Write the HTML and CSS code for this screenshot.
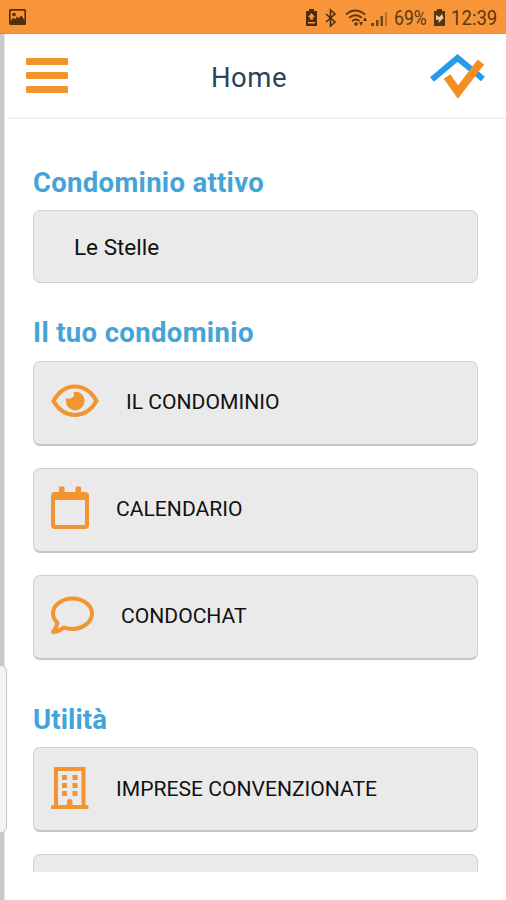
FILE: index.html
```html
<!DOCTYPE html>
<html lang="it">
<head>
<meta charset="utf-8">
<title>Home</title>
<link rel="stylesheet" href="styles.css">
</head>
<body>
<div class="status">
  <svg class="status-photo" width="17" height="16" viewBox="0 0 17 16"><path fill="#543009" fill-rule="evenodd" d="M1.500 0h14a1.500 1.500 0 0 1 1.500 1.500v13a1.500 1.500 0 0 1-1.500 1.500h-14a1.500 1.500 0 0 1-1.500-1.500v-13a1.500 1.500 0 0 1 1.500-1.500zM1.700 1.700v10l2.500-3 2 1.500 2-3 1.500 2 2.500-3 3.200 4.500v-9z"/><circle cx="5" cy="5.500" r="1.800" fill="#543009"/></svg>
  <div class="status-right">
    <svg width="88" height="20" viewBox="0 0 88 20">
      <path fill="#4a2d10" fill-rule="evenodd" d="M4 1h5v2h3v15H1V3h3zM6.500 5L3 9h1.800v2.500h3.400V9H10zM3 14v1.500h7V14z"/>
      <path fill="none" stroke="#4a2d10" stroke-width="1.600" d="M21 6l9 8-4.500 4V2l4.500 4-9 8"/>
      <g fill="none" stroke="#5b3611" stroke-width="1.900"><path d="M41 6.500q9-8 19 0"/><path d="M44 9.800q6.500-5 13 0"/><path d="M47 13q4-3 7.500 0"/></g>
      <circle cx="51" cy="16" r="1.800" fill="#5b3611"/>
      <path fill="#5b3611" d="M54 14h4l-2 4zM58 13h4l-2-4z"/>
      <path fill="#754615" d="M66 15h3v3h-3zM71 12h2.500v6H71zM75.500 8H78v10h-2.500z"/>
      <path fill="#b87029" d="M80 4h2v14h-2z"/>
    </svg>
    <span class="battery-level">69%</span>
    <svg class="battery" width="13" height="18" viewBox="0 0 13 18"><path fill="#543612" d="M4 0h5v2h3v15H1V2h3z"/><path fill="#f9c98f" d="M3 6l3.500 2L9 5l1.500 4-5 5 .5-3.500-3 .5z"/></svg>
    <span class="clock">12:39</span>
  </div>
</div>
<div class="screen">
  <div class="page">
    <header class="topbar">
      <div class="menu"><i></i><i></i><i></i></div>
      <h1>Home</h1>
      <svg class="logo" width="56" height="46" viewBox="430 53 56 46"><path fill="none" stroke="#259be9" stroke-width="6" stroke-linejoin="miter" d="M432 79.500L457.500 58l25.500 21"/><path fill="none" stroke="#f38f20" stroke-width="8" d="M447 76.500l11 15.500L481 62"/></svg>
    </header>
    <main class="content">
      <h2>Condominio attivo</h2>
      <div class="card active">Le Stelle</div>
      <h2 class="tuo">Il tuo condominio</h2>
      <div class="card button">
        <svg width="48" height="34" viewBox="0 0 48 34"><path fill="none" stroke="#f29430" stroke-width="4" d="M2.500 17C13-2.500 35-2.500 45.500 17C35 35.500 13 35.500 2.500 17z"/><path fill="#f29430" d="M22.500 8.200C28 6.500 33.500 11 33.500 17a9.300 9.300 0 0 1-18.600 0c0-1 .2-2 .5-3 2.500 1.500 6 .5 7.300-1.800.6-1.300.5-2.700-.2-4z"/></svg>
        <span>IL CONDOMINIO</span>
      </div>
      <div class="card button">
        <svg width="38" height="44" viewBox="0 0 38 44"><path fill="#f29430" fill-rule="evenodd" d="M8 1.500Q8 .5 9 .5h3.500q1 0 1 1V6h11V1.500q0-1 1-1H29q1 0 1 1V6h4q4 0 4 4v29q0 4-4 4H4q-4 0-4-4V10q0-4 4-4h4zM4 14v24q0 1 1 1h28q1 0 1-1V14z"/></svg>
        <span>CALENDARIO</span>
      </div>
      <div class="card button">
        <svg width="43" height="38" viewBox="0 0 43 38"><path fill="none" stroke="#f29430" stroke-width="4" stroke-linejoin="round" d="M21.500 2.500C32 2.500 41 9 41 17.500S32 33 21.500 33c-3 0-6-.5-8.500-1.500C9.500 34 6 36 2 36c2-2 3.500-5 4.500-9C3.500 24 2 21 2 17.500 2 9 11 2.500 21.500 2.500z"/></svg>
        <span>CONDOCHAT</span>
      </div>
      <h2 class="util">Utilità</h2>
      <div class="card button imprese">
        <svg width="38" height="42" viewBox="0 0 38 42"><path fill="none" stroke="#f29430" stroke-width="4" d="M5 38V2h27.500v36"/><path fill="#f29430" d="M2 38h34q1.500 0 1.500 2v2H0v-2q0-2 2-2zM11 8h5v5h-5zM21.500 8h5v5h-5zM11 16h5v5h-5zM21.500 16h5v5h-5zM11 24h5v5h-5zM21.500 24h5v5h-5zM16 34q0-2 2.700-2t2.800 2v5H16z"/></svg>
        <span>IMPRESE CONVENZIONATE</span>
      </div>
      <div class="card button"></div>
    </main>
  </div>
</div>
<div class="handle"></div>
</body>
</html>
```
FILE: styles.css
```css
* { box-sizing: border-box; }
body {
  margin: 0;
  height: 900px;
  overflow: hidden;
  position: relative;
  background: #fff;
  font-family: Roboto, "Liberation Sans", sans-serif;
}
.status {
  height: 34px;
  background: #f89538;
  border-bottom: 1px solid #ee8a1c;
  display: flex;
  align-items: center;
  justify-content: space-between;
  padding: 0 9px;
  color: #5c3915;
}
.status-photo { margin-top: 1px; }
.status-right {
  display: flex;
  align-items: center;
  font-size: 20px;
  line-height: 24px;
  padding-top: 2px;
}
.battery-level { width: 33px; margin-left: 1px; white-space: nowrap; transform: scaleX(.88); transform-origin: left; }
.battery { margin: 0 5px 0 6px; }
.clock { width: 46px; white-space: nowrap; transform: scaleX(.93); transform-origin: left; }
.screen {
  height: 866px;
  background: linear-gradient(90deg, #c9c9c9 0, #c9c9c9 4px, #e6e6e6 4px, #e6e6e6 5px, #fff 5px);
  padding-left: 5px;
}
.page { background: #fff; height: 838px; overflow: hidden; }
.topbar {
  height: 85px;
  margin-left: 3px;
  border-bottom: 2px solid #f0f0f0;
  display: flex;
  align-items: center;
  justify-content: space-between;
  padding: 0 20px 0 18px;
}
.menu { display: flex; flex-direction: column; gap: 7px; }
.menu i { display: block; width: 42px; height: 7px; border-radius: 1px; background: #f19430; }
h1 {
  margin: 4px 0 0;
  color: #2c435a;
  font-size: 27.500px;
  font-weight: 400;
  line-height: 34px;
  letter-spacing: .5px;
}
.content { padding: 46px 28px 0; }
h2 {
  margin: 0 0 10px;
  color: #45a4d7;
  font-size: 27.500px;
  font-weight: 700;
  line-height: 35px;
  letter-spacing: .3px;
}
.card {
  background: #eaeaea;
  border: 1px solid #d1d1d1;
  border-radius: 7px;
  color: #111;
}
.active { height: 73px; padding: 1px 40px 0; font-size: 22.500px; line-height: 70px; }
.tuo { margin-top: 32px; margin-bottom: 11px; letter-spacing: .35px; }
.button {
  height: 85px;
  margin-bottom: 22px;
  border-bottom: 2px solid #c6c6c6;
  display: flex;
  align-items: center;
  gap: 27px;
  padding: 0 17px 5px;
  font-size: 21.100px;
}
.button span { padding-top: 1px; }
.imprese { padding-bottom: 3px; }
.util { margin-top: 42px; letter-spacing: .1px; }
.handle {
  position: absolute;
  left: -6px;
  top: 665px;
  width: 13px;
  height: 168px;
  background: #f3f3f3;
  border: 1px solid #c8c8c8;
  border-radius: 6px;
}
```
